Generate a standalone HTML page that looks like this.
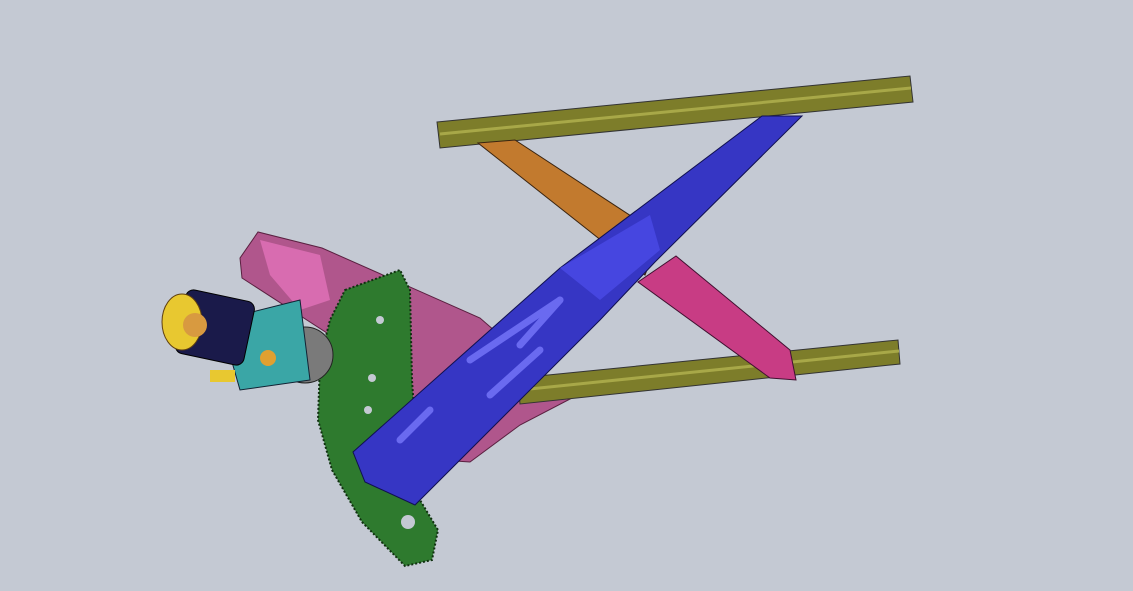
<!DOCTYPE html>
<html><head><meta charset="utf-8"><style>
html,body{margin:0;padding:0;background:#c4c9d3;width:1133px;height:591px;overflow:hidden}
svg{display:block}
</style></head><body>
<svg width="1133" height="591" viewBox="0 0 1133 591" xmlns="http://www.w3.org/2000/svg">
<rect width="1133" height="591" fill="#c4c9d3"/>
<polygon points="240,258 258,232 322,248 480,318 572,398 520,425 470,462 440,460 400,400 330,335 242,278" fill="#b0568c" stroke="#5a2040" stroke-width="1"/>
<polygon points="260,240 320,255 330,300 300,310 270,275" fill="#d86cb0"/>
<polygon points="518,378 898,340 900,364 520,404" fill="#7d7d2a" stroke="#333" stroke-width="1"/>
<line x1="520" y1="390" x2="899" y2="351" stroke="#a8a848" stroke-width="3"/>
<polygon points="638,282 676,256 790,350 796,380 770,378" fill="#c83c84" stroke="#401030" stroke-width="1"/>
<polygon points="437,122 910,76 913,102 440,148" fill="#7d7d2a" stroke="#333" stroke-width="1"/>
<line x1="440" y1="134" x2="911" y2="88" stroke="#a8a848" stroke-width="3"/>
<polygon points="478,143 515,140 660,235 645,275" fill="#c27a2e" stroke="#3a2410" stroke-width="1"/>
<circle cx="633" cy="252" r="22" fill="#b06a22" stroke="#3a2410"/>
<polygon points="345,290 400,270 410,290 412,380 420,500 438,530 432,560 405,566 362,522 332,470 318,420 320,360 330,320" fill="#2e7a2e" stroke="#103010" stroke-width="2" stroke-dasharray="2,2"/>
<g fill="#c4c9d3"><circle cx="380" cy="320" r="4"/><circle cx="372" cy="378" r="4"/><circle cx="368" cy="410" r="4"/><circle cx="408" cy="522" r="7"/></g>
<polygon points="353,452 560,268 762,116 802,116 655,262 600,320 415,505 365,482" fill="#3636c4" stroke="#101050" stroke-width="1"/>
<polygon points="560,268 650,215 660,250 600,300" fill="#4646e0"/>
<g stroke="#6a6af0" stroke-width="7" stroke-linecap="round">
<line x1="470" y1="360" x2="560" y2="300"/><line x1="520" y1="345" x2="560" y2="300"/>
<line x1="490" y1="395" x2="540" y2="350"/><line x1="400" y1="440" x2="430" y2="410"/>
</g>
<circle cx="305" cy="355" r="28" fill="#7a7a7a" stroke="#222"/>
<polygon points="220,320 300,300 310,380 240,390" fill="#3aa6a6" stroke="#123"/>
<rect x="180" y="295" width="70" height="65" rx="8" fill="#1a1a4a" stroke="#000" transform="rotate(12 215 327)"/>
<ellipse cx="182" cy="322" rx="20" ry="28" fill="#e8c830" stroke="#604010"/>
<circle cx="195" cy="325" r="12" fill="#d89a40"/>
<circle cx="268" cy="358" r="8" fill="#e0a030"/>
<rect x="210" y="370" width="25" height="12" fill="#e8c830"/>
</svg>
</body></html>
